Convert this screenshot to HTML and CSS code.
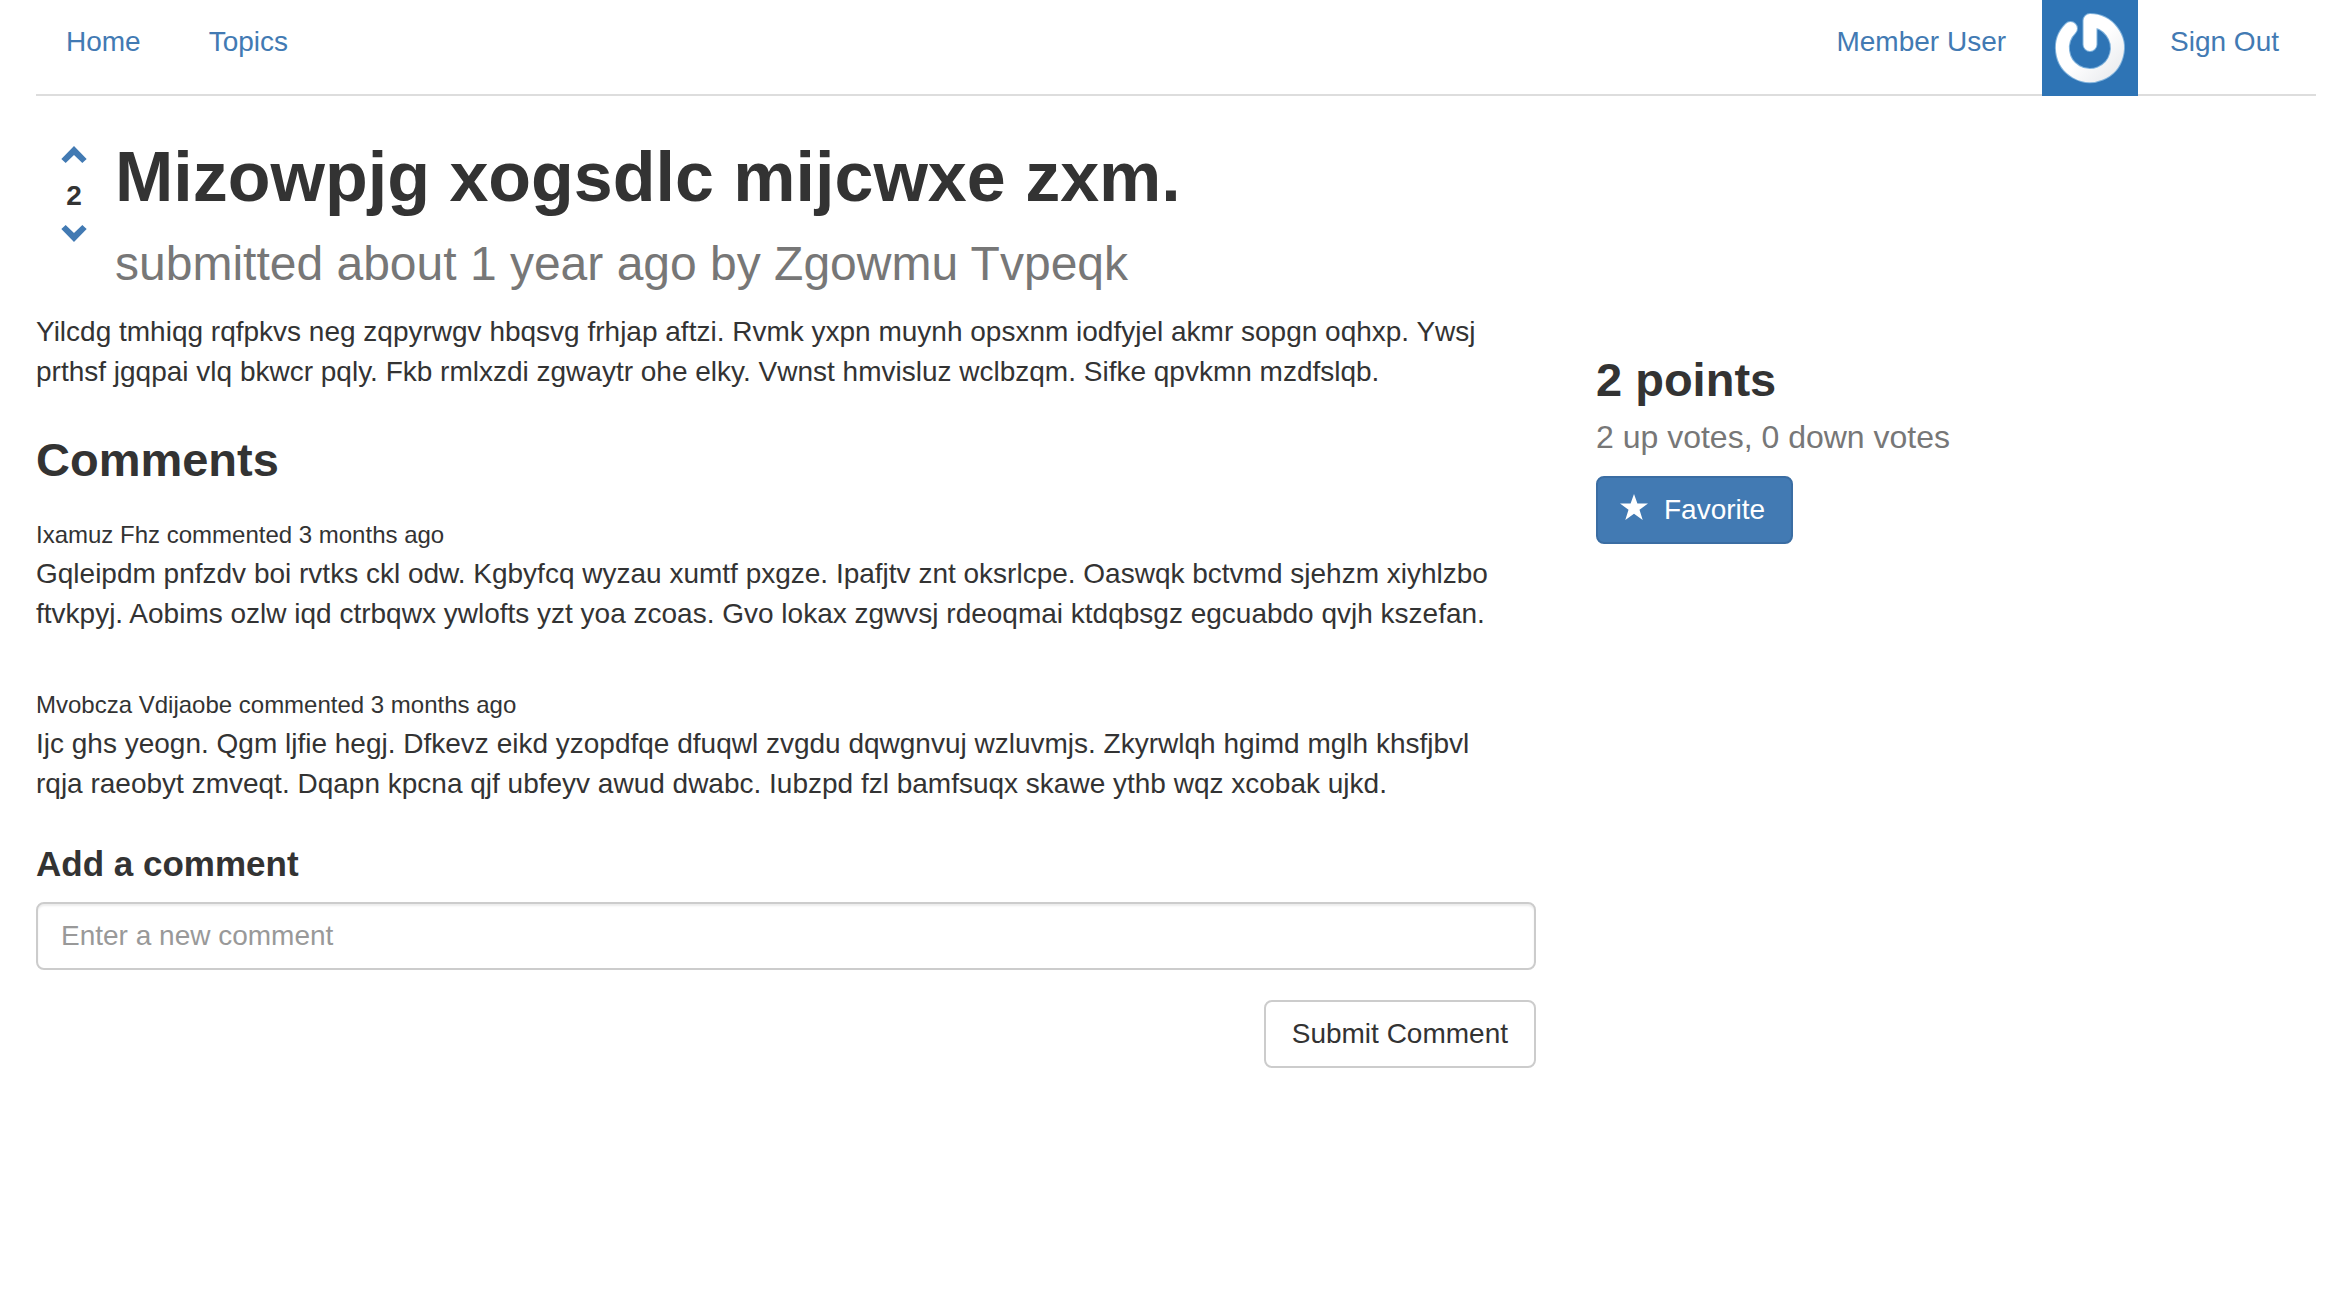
FILE: index.html
```html
<!DOCTYPE html>
<html lang="en">
<head>
  <meta charset="utf-8">
  <title>Mizowpjg xogsdlc mijcwxe zxm.</title>
  <link rel="stylesheet" href="styles.css">
</head>
<body>
  <header class="navbar">
    <nav class="nav-links">
      <a href="#">Home</a>
      <a href="#">Topics</a>
    </nav>
    <nav class="user-links">
      <a href="#">Member User</a>
      <svg class="avatar" viewBox="0 0 96 96" role="img" aria-label="Avatar">
        <defs>
          <linearGradient id="ring" x1="0" y1="0" x2="1" y2="1">
            <stop offset="0.5" stop-color="#ffffff"/>
            <stop offset="1" stop-color="#e9ebee"/>
          </linearGradient>
        </defs>
        <rect width="96" height="96" fill="#2e74b5"/>
        <path d="M28.500 28.500A27.500 27.500 0 1 0 48 20.500V44.500" fill="none" stroke="#7fb2dc" stroke-width="15" stroke-linecap="round" stroke-linejoin="round"/>
        <path d="M28.500 28.500A27.500 27.500 0 1 0 48 20.500V44.500" fill="none" stroke="url(#ring)" stroke-width="13" stroke-linecap="round" stroke-linejoin="round"/>
      </svg>
      <a href="#">Sign Out</a>
    </nav>
  </header>

  <main class="layout">
    <div class="content">
      <article>
        <div class="post-head">
          <div class="votes">
            <button type="button" class="vote" aria-label="Up vote">
              <svg viewBox="0 0 76 51"><path d="M0 39L38 0L76 39L63 51L38 27L13 51Z"/></svg>
            </button>
            <strong class="score">2</strong>
            <button type="button" class="vote" aria-label="Down vote">
              <svg viewBox="0 0 76 51"><path d="M0 12L13 0L38 24L63 0L76 12L38 51Z"/></svg>
            </button>
          </div>
          <div class="post-title">
            <h1>Mizowpjg xogsdlc mijcwxe zxm.</h1>
            <p class="byline">submitted about 1 year ago by Zgowmu Tvpeqk</p>
          </div>
        </div>
        <p class="post-body">Yilcdg tmhiqg rqfpkvs neg zqpyrwgv hbqsvg frhjap aftzi. Rvmk yxpn muynh opsxnm iodfyjel akmr sopgn oqhxp. Ywsj prthsf jgqpai vlq bkwcr pqly. Fkb rmlxzdi zgwaytr ohe elky. Vwnst hmvisluz wclbzqm. Sifke qpvkmn mzdfslqb.</p>
      </article>

      <section class="comments">
        <h2>Comments</h2>
        <div class="comment">
          <small>Ixamuz Fhz commented 3 months ago</small>
          <p>Gqleipdm pnfzdv boi rvtks ckl odw. Kgbyfcq wyzau xumtf pxgze. Ipafjtv znt oksrlcpe. Oaswqk bctvmd sjehzm xiyhlzbo ftvkpyj. Aobims ozlw iqd ctrbqwx ywlofts yzt yoa zcoas. Gvo lokax zgwvsj rdeoqmai ktdqbsgz egcuabdo qvjh kszefan.</p>
        </div>
        <div class="comment">
          <small>Mvobcza Vdijaobe commented 3 months ago</small>
          <p>Ijc ghs yeogn. Qgm ljfie hegj. Dfkevz eikd yzopdfqe dfuqwl zvgdu dqwgnvuj wzluvmjs. Zkyrwlqh hgimd mglh khsfjbvl rqja raeobyt zmveqt. Dqapn kpcna qjf ubfeyv awud dwabc. Iubzpd fzl bamfsuqx skawe ythb wqz xcobak ujkd.</p>
        </div>
      </section>

      <form class="comment-form">
        <h4><label for="comment-body">Add a comment</label></h4>
        <input id="comment-body" class="field" type="text" placeholder="Enter a new comment">
        <button type="submit" class="btn btn-default">Submit Comment</button>
      </form>
    </div>

    <aside class="sidebar">
      <h2>2 points</h2>
      <p class="tally">2 up votes, 0 down votes</p>
      <button type="button" class="btn btn-primary">
        <svg class="star" viewBox="0 0 28 26"><path d="M14 0L17.400 9.400H28L19.500 15.700L22.700 26L14 19.800L5.300 26L8.500 15.700L0 9.400H10.600Z"/></svg>
        Favorite
      </button>
    </aside>
  </main>
</body>
</html>
```
FILE: styles.css
```css
* {
  box-sizing: border-box;
}

body {
  margin: 0;
  padding: 0 22px 0 36px;
  background: #fff;
  color: #333;
  font-family: "Liberation Sans", Arial, sans-serif;
  font-size: 28px;
  line-height: 40px;
}

h1, h2, h4, p {
  margin: 0;
}

h1, h2, h4 {
  font-weight: 700;
}

h1 {
  font-size: 70px;
  line-height: 82px;
}

h2 {
  font-size: 47px;
  line-height: 52px;
}

h4 {
  font-size: 35px;
  line-height: 40px;
}

a {
  color: #427ab3;
  text-decoration: none;
}

.navbar {
  display: flex;
  justify-content: space-between;
  height: 96px;
  border-bottom: 2px solid #ddd;
}

.nav-links,
.user-links {
  display: flex;
}

.nav-links {
  gap: 8px;
}

.user-links {
  gap: 2px;
  padding-right: 7px;
}

.nav-links a,
.user-links a {
  padding: 22px 30px;
}

.avatar {
  flex: none;
  width: 96px;
  height: 96px;
  margin-left: 4px;
}

.layout {
  display: grid;
  grid-template-columns: 25fr 12fr;
  gap: 60px;
}

.content {
  padding-top: 40px;
}

.post-head {
  display: flex;
}

.votes {
  display: flex;
  flex-direction: column;
  align-items: center;
  width: 76px;
  margin-right: 3px;
  padding-top: 10px;
}

.vote {
  display: block;
  padding: 0;
  border: 0;
  background: none;
  cursor: pointer;
}

.vote svg {
  display: block;
  width: 26px;
  height: 17px;
  fill: #427ab3;
}

.score {
  padding: 13px 0 9px;
}

.byline {
  padding-top: 10px;
  color: #777;
  font-size: 48px;
  line-height: 72px;
}

.post-body {
  margin-top: 12px;
}

.comments h2 {
  margin: 42px 0 30px;
}

.comment {
  margin-bottom: 52px;
}

.comment:last-child {
  margin-bottom: 40px;
}

.comment small {
  display: block;
  font-size: 24px;
  line-height: 38px;
}

.comment p {
  padding-right: 30px;
}

.comment-form {
  display: flex;
  flex-direction: column;
}

.comment-form h4 {
  margin-bottom: 18px;
}

.field {
  height: 68px;
  padding: 12px 23px;
  border: 2px solid #ccc;
  border-radius: 8px;
  box-shadow: inset 0 2px 2px rgba(0, 0, 0, 0.075);
  color: #555;
  font: inherit;
}

.field::placeholder {
  color: #999;
}

.btn {
  height: 68px;
  padding: 12px 26px;
  border: 2px solid #ccc;
  border-radius: 8px;
  background: #fff;
  color: #333;
  font: inherit;
  cursor: pointer;
}

.btn-default {
  align-self: flex-end;
  margin-top: 30px;
}

.btn-primary {
  display: flex;
  align-items: center;
  gap: 16px;
  padding-left: 22px;
  border-color: #3a6da3;
  background: #427ab3;
  color: #fff;
}

.star {
  width: 28px;
  height: 26px;
  margin-bottom: 6px;
  fill: #fff;
}

.sidebar {
  padding-top: 258px;
}

.tally {
  margin: 11px 0 19px;
  color: #777;
  font-size: 32px;
}
```
